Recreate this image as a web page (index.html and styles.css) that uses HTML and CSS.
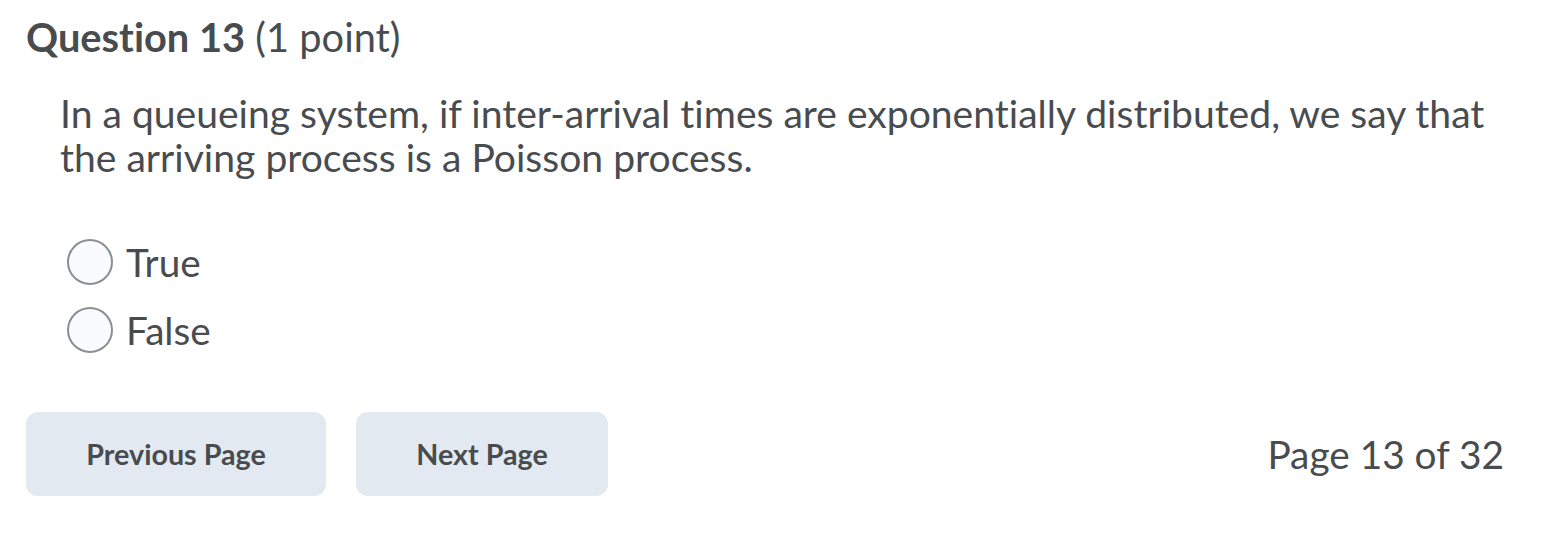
FILE: index.html
```html
<!DOCTYPE html>
<html lang="en">
<head>
<meta charset="utf-8">
<title>Question 13</title>
<link rel="stylesheet" href="styles.css">
</head>
<body>
<main class="page">
  <h2 class="q-title"><strong>Question 13</strong> <span class="q-points">(1 point)</span></h2>
  <div class="q-body">
    <p class="q-text">In a queueing system, if inter-arrival times are exponentially distributed, we say that the arriving process is a Poisson process.</p>
    <div class="options">
      <label class="option"><span class="radio"></span><span class="opt-label">True</span></label>
      <label class="option"><span class="radio"></span><span class="opt-label">False</span></label>
    </div>
  </div>
  <div class="nav">
    <div class="nav-buttons">
      <button class="btn btn-prev">Previous Page</button>
      <button class="btn btn-next">Next Page</button>
    </div>
    <div class="page-count">Page 13 of 32</div>
  </div>
</main>
</body>
</html>
```
FILE: styles.css
```css
* { box-sizing: border-box; }
html, body { margin: 0; padding: 0; background: #ffffff; }
body {
  font-family: Lato, "Noto Sans", sans-serif;
  color: #494c4e;
  font-variant-ligatures: none;
}
.page {
  padding: 13px 60px 0 26px;
}
.q-title {
  margin: 0;
  font-size: 39.8px;
  line-height: 48px;
  font-weight: 400;
}
.q-title strong { font-weight: 700; }
.q-body {
  padding-left: 34px;
}
.q-text {
  margin: 30px 0 0 0;
  font-size: 39.1px;
  line-height: 44px;
  width: 1460px;
}
.options {
  margin-top: 60px;
  display: flex;
  flex-direction: column;
  gap: 22px;
}
.option {
  display: flex;
  align-items: center;
  gap: 13px;
  font-size: 38.7px;
  line-height: 46px;
  padding-left: 7px;
}
.radio {
  width: 46px;
  height: 46px;
  border-radius: 50%;
  border: 2px solid #898f93;
  background: #f9fbff;
  flex: none;
}
.nav {
  margin-top: 59px;
  display: flex;
  align-items: center;
  justify-content: space-between;
}
.nav-buttons {
  display: flex;
  gap: 30px;
}
.btn {
  font-family: Lato, "Noto Sans", sans-serif;
  font-variant-ligatures: none;
  font-weight: 700;
  font-size: 28.7px;
  color: #494c4e;
  background: #e3e9f1;
  border: none;
  border-radius: 12px;
  height: 84px;
  padding: 0;
}
.btn-prev { width: 300px; }
.btn-next { width: 252px; }
.page-count {
  font-size: 38.8px;
  line-height: 46px;
}
```
